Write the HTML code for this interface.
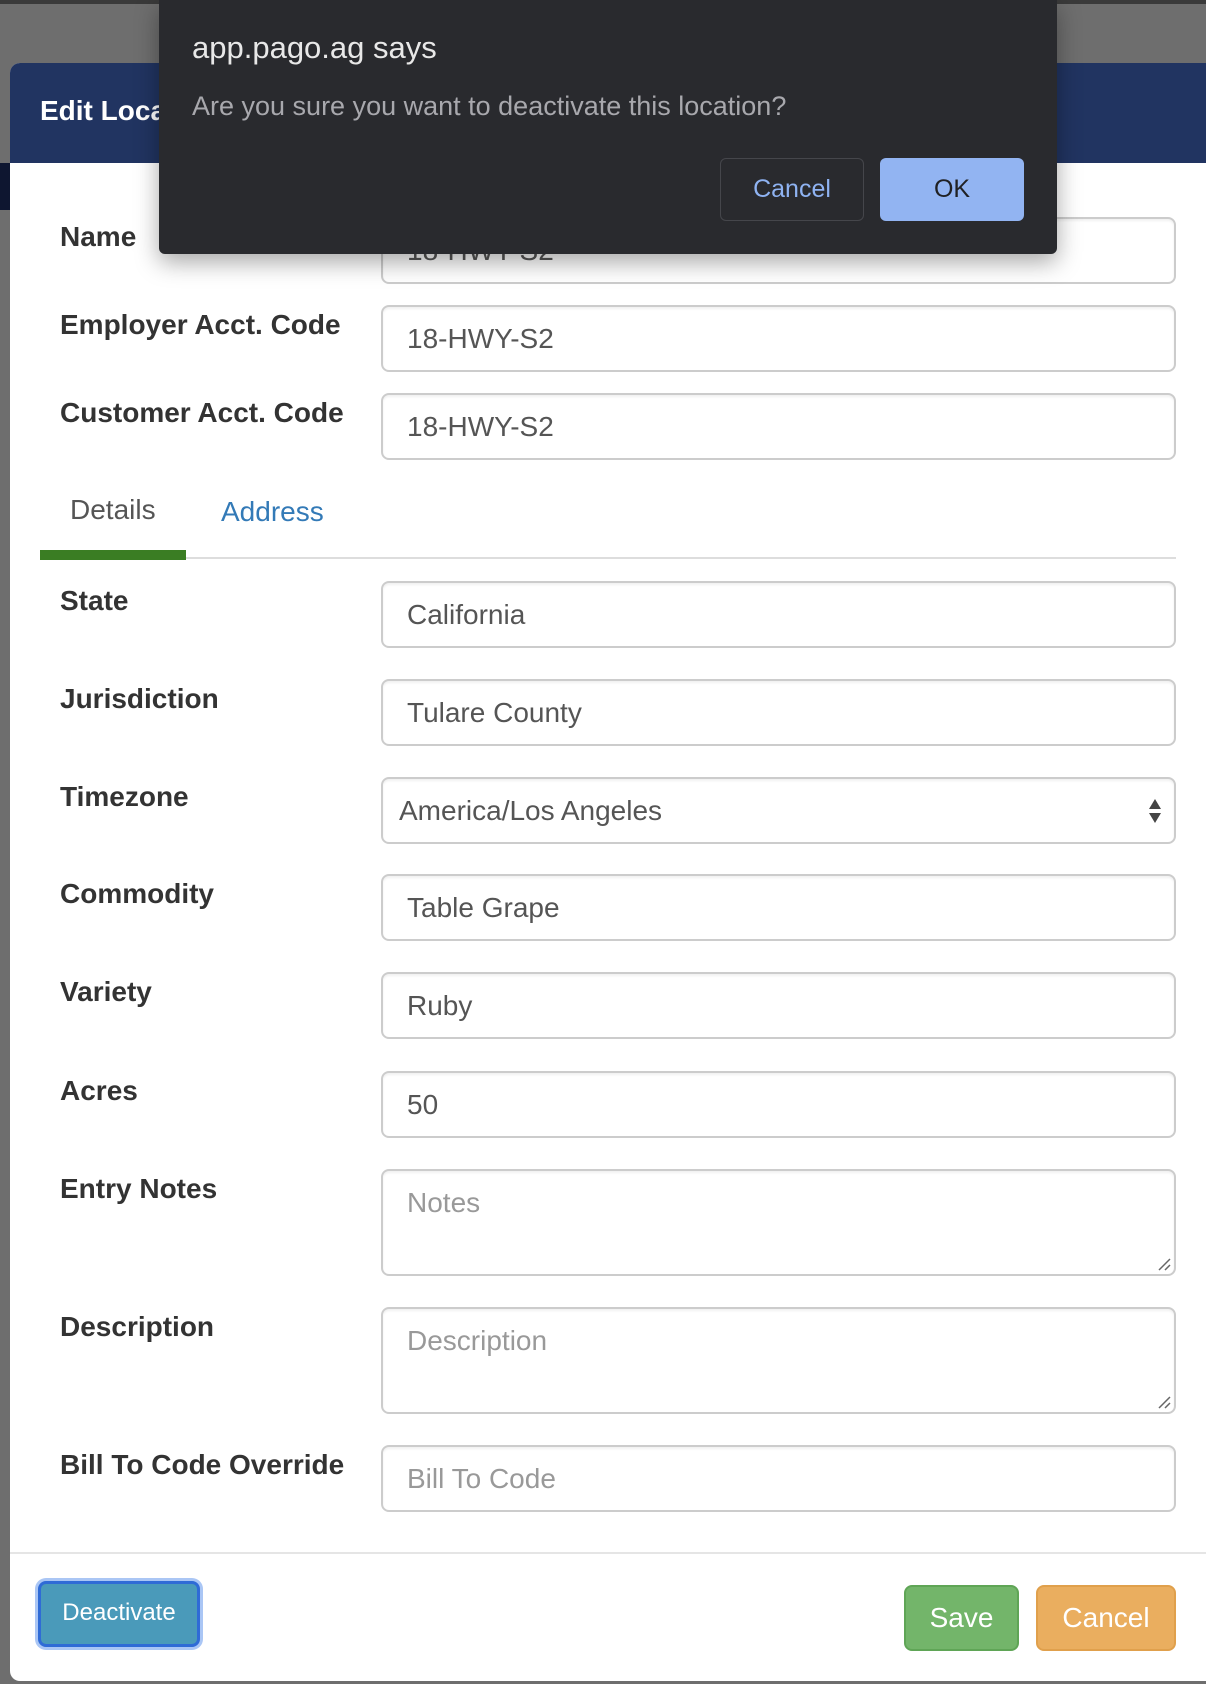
<!DOCTYPE html>
<html><head><meta charset="utf-8"><style>
*{box-sizing:border-box;margin:0;padding:0}
body{width:1206px;height:1684px;position:relative;overflow:hidden;background:#6e6e6e;font-family:"Liberation Sans",Arial,sans-serif}
.abs{position:absolute}
.modal{left:10px;top:63px;width:1210px;height:1618px;background:#fff;border-radius:10px 0 0 10px;overflow:hidden}
.hdr{left:0;top:0;width:100%;height:100px;background:#213461}
.lbl{position:absolute;left:60px;font-weight:bold;font-size:28px;color:#333;line-height:40px}
.inp{position:absolute;left:381px;width:795px;height:67px;border:2px solid #ccc;border-radius:8px;font-size:28px;color:#555;padding-left:24px;line-height:63px;background:#fff;box-shadow:inset 0 2px 2px rgba(0,0,0,.06)}
.ph{color:#999}
.ta{line-height:normal;padding-top:16px}
.btn{position:absolute;color:#fff;text-align:center;border-radius:8px}
.grip{position:absolute;right:3px;bottom:3px}
</style></head><body>
<div class="abs" style="left:0;top:0;width:1206px;height:4px;background:#3a3a3a"></div>
<div class="abs" style="left:0;top:163px;width:12px;height:47px;background:#0e1630"></div>
<div class="abs modal">
 <div class="abs hdr"></div>
 <div class="abs" style="left:30px;top:28px;font-size:28px;font-weight:bold;color:#fff;line-height:40px">Edit Location</div>
</div>
<div class="lbl" style="top:217px">Name</div>
<div class="inp" style="top:217px">18-HWY-S2</div>
<div class="lbl" style="top:305px">Employer Acct. Code</div>
<div class="inp" style="top:305px">18-HWY-S2</div>
<div class="lbl" style="top:393px">Customer Acct. Code</div>
<div class="inp" style="top:393px">18-HWY-S2</div>

<div class="abs" style="left:70px;top:490px;font-size:28px;color:#555;line-height:40px">Details</div>
<div class="abs" style="left:221px;top:492px;font-size:28px;color:#337ab7;line-height:40px">Address</div>
<div class="abs" style="left:40px;top:557px;width:1136px;height:2px;background:#ddd"></div>
<div class="abs" style="left:40px;top:550px;width:146px;height:10px;background:#3a7d23"></div>

<div class="lbl" style="top:581px">State</div>
<div class="inp" style="top:581px">California</div>
<div class="lbl" style="top:679px">Jurisdiction</div>
<div class="inp" style="top:679px">Tulare County</div>
<div class="lbl" style="top:777px">Timezone</div>
<div class="inp" style="top:777px;padding-left:16px">America/Los Angeles
 <svg class="abs" style="right:12px;top:19px" width="14" height="26" viewBox="0 0 14 26"><path d="M7 1L13 11H1Z M7 25L13 15H1Z" fill="#444"/></svg></div>
<div class="lbl" style="top:874px">Commodity</div>
<div class="inp" style="top:874px">Table Grape</div>
<div class="lbl" style="top:972px">Variety</div>
<div class="inp" style="top:972px">Ruby</div>
<div class="lbl" style="top:1071px">Acres</div>
<div class="inp" style="top:1071px">50</div>
<div class="lbl" style="top:1169px">Entry Notes</div>
<div class="inp ta ph" style="top:1169px;height:107px">Notes<svg class="grip" width="14" height="14" viewBox="0 0 14 14"><path d="M13 2L2 13M13 8L8 13" stroke="#666" stroke-width="1.5"/></svg></div>
<div class="lbl" style="top:1307px">Description</div>
<div class="inp ta ph" style="top:1307px;height:107px">Description<svg class="grip" width="14" height="14" viewBox="0 0 14 14"><path d="M13 2L2 13M13 8L8 13" stroke="#666" stroke-width="1.5"/></svg></div>
<div class="lbl" style="top:1445px">Bill To Code Override</div>
<div class="inp ph" style="top:1445px">Bill To Code</div>

<div class="abs" style="left:10px;top:1552px;width:1196px;height:2px;background:#e5e5e5"></div>
<div class="btn" style="left:38px;top:1581px;width:162px;height:66px;background:#4a9aba;border:3px solid #2f6bd6;box-shadow:0 0 0 3px #aac6f5;font-size:24px;line-height:58px">Deactivate</div>
<div class="btn" style="left:904px;top:1585px;width:115px;height:66px;background:#73b56a;border:2px solid #5fa556;font-size:28px;line-height:62px">Save</div>
<div class="btn" style="left:1036px;top:1585px;width:140px;height:66px;background:#eaae5f;border:2px solid #e0a04c;font-size:28px;line-height:62px">Cancel</div>

<div class="abs" style="left:159px;top:0;width:898px;height:254px;background:#292a2e;border-radius:0 0 6px 6px;box-shadow:0 8px 24px rgba(0,0,0,.35)">
 <div class="abs" style="left:33px;top:30px;font-size:31px;color:#e8e8e8">app.pago.ag says</div>
 <div class="abs" style="left:33px;top:91px;font-size:27px;color:#a8a8ad">Are you sure you want to deactivate this location?</div>
 <div class="abs" style="left:561px;top:158px;width:144px;height:63px;border:1px solid #45464b;border-radius:6px;color:#8fb3f2;font-size:25px;text-align:center;line-height:61px">Cancel</div>
 <div class="abs" style="left:721px;top:158px;width:144px;height:63px;background:#92b4f2;border-radius:6px;color:#202124;font-size:25px;text-align:center;line-height:63px">OK</div>
</div>
</body></html>
